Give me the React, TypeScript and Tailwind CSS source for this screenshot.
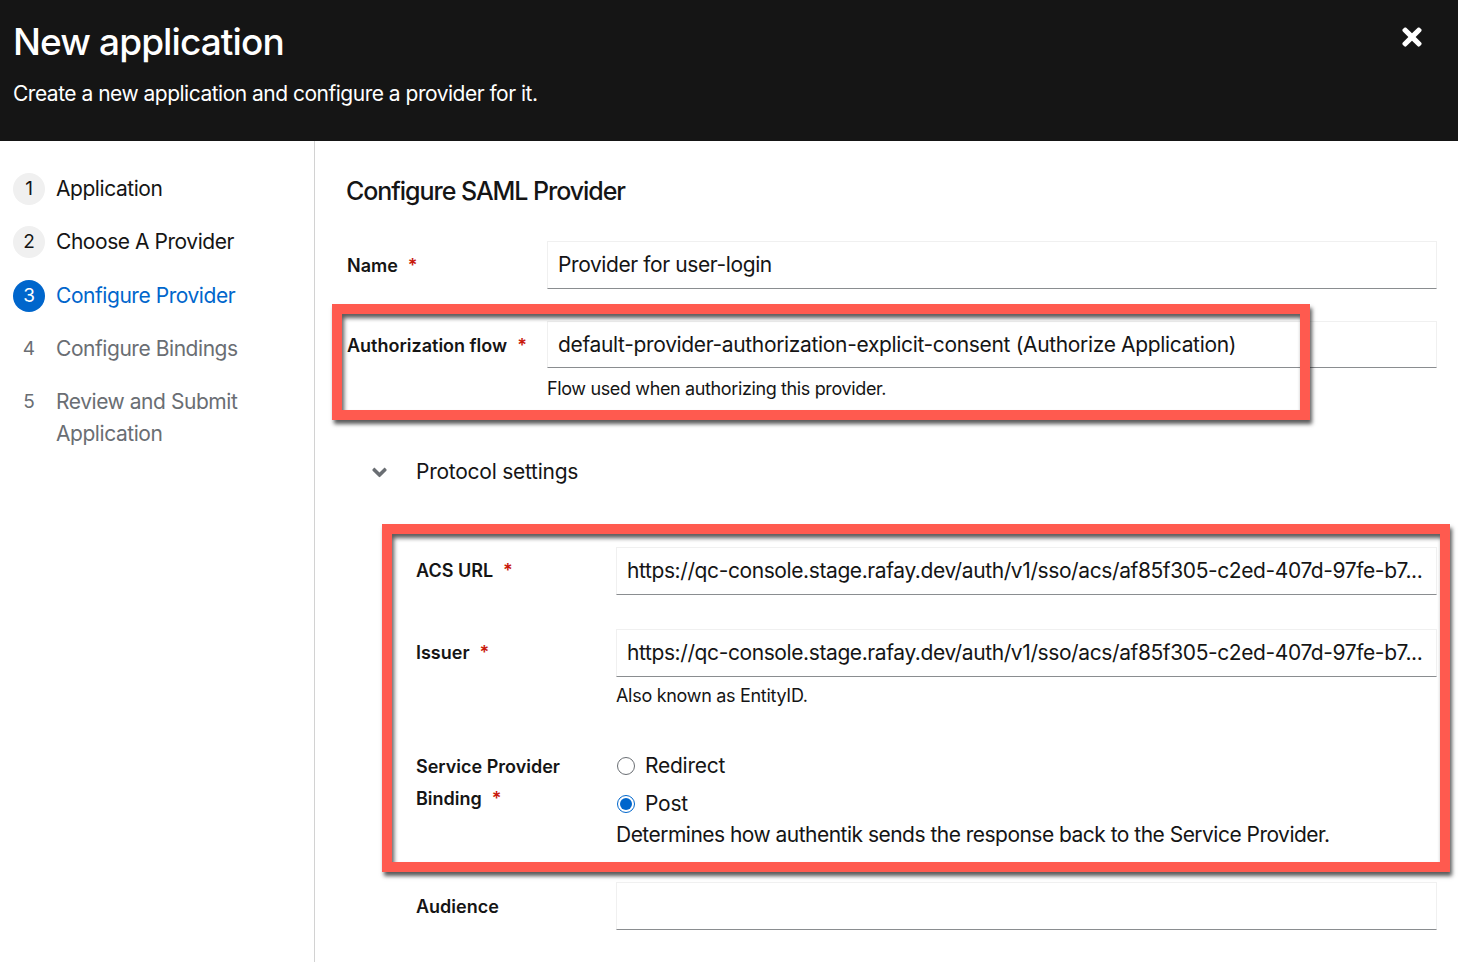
import { FaTimes, FaAngleDown } from "react-icons/fa";

const font = "[font-family:Inter,'Liberation_Sans',sans-serif]";

function Step({ n, label, state, className = "" }: { n: number; label: string; state: "done" | "active" | "todo"; className?: string }) {
  const circle =
    state === "active"
      ? "bg-[#0066cc] text-white"
      : state === "done"
        ? "bg-[#f0f0f0] text-[#151515]"
        : "text-[#6a6e73]";
  const text = state === "active" ? "text-[#0066cc]" : state === "done" ? "text-[#151515]" : "text-[#6a6e73]";
  return (
    <div className={`flex items-start ${className}`}>
      <span className={`flex h-8 w-8 shrink-0 items-center justify-center rounded-full text-[19px] ${circle}`}>{n}</span>
      <span className={`ml-[11px] text-[21px] leading-[32px] tracking-[-0.45px] ${text}`}>{label}</span>
    </div>
  );
}

function Field({ value, className = "h-12 leading-[46px] tracking-[-0.4px]" }: { value?: string; className?: string }) {
  return (
    <div className={`w-full min-w-0 truncate border border-[#f0f0f0] border-b-[#8a8d90] pl-[10px] text-[21px] text-[#151515] ${className}`}>
      {value}
    </div>
  );
}

function Label({ text, required = true }: { text: string; required?: boolean }) {
  return (
    <span className="text-[18px] font-semibold leading-[32px] text-[#151515]">
      {text}
      {required && <span className="ml-[10px] text-[#c9190b]">*</span>}
    </span>
  );
}

const URL_TEXT = "https://qc-console.stage.rafay.dev/auth/v1/sso/acs/af85f305-c2ed-407d-97fe-b7...";

function Radio({ checked, label, className = "" }: { checked?: boolean; label: string; className?: string }) {
  return (
    <div className={`flex items-center pl-[1px] ${className}`}>
      <span className={`flex h-[18px] w-[18px] items-center justify-center rounded-full border ${checked ? "border-[#0066cc]" : "border-[#6a6e73]"}`}>
        {checked && <span className="h-3 w-3 rounded-full bg-[#0066cc]" />}
      </span>
      <span className="ml-[10px] text-[21px] leading-[28px] tracking-[-0.25px] text-[#151515]">{label}</span>
    </div>
  );
}

export default function App() {
  return (
    <div className={`relative flex h-[962px] w-[1458px] flex-col overflow-hidden bg-white ${font}`}>
      <header className="relative h-[141px] shrink-0 bg-[#151515] pl-[13px] pt-[18px] text-white">
        <h1 className="text-[37px] font-medium leading-[48px] tracking-[-0.9px]">New application</h1>
        <p className="mt-[12px] text-[21px] leading-[32px] tracking-[-0.5px]">Create a new application and configure a provider for it.</p>
        <FaTimes className="absolute left-[1402px] top-[23px] h-[28px] w-[20px] text-white" />
      </header>
      <div className="flex min-h-0 flex-1">
        <nav className="w-[315px] shrink-0 border-r border-[#d2d2d2] pl-[13px] pt-[32px]">
          <Step n={1} label="Application" state="done" />
          <Step n={2} label="Choose A Provider" state="done" className="mt-[21px]" />
          <Step n={3} label="Configure Provider" state="active" className="mt-[22px]" />
          <Step n={4} label="Configure Bindings" state="todo" className="mt-[21px]" />
          <Step n={5} label="Review and Submit Application" state="todo" className="mt-[21px] w-[260px]" />
        </nav>
        <main className="min-w-0 flex-1 pl-[32px] pr-[21px] pt-[32px]">
          <h2 className="-ml-[1px] text-[25px] font-medium leading-[36px] tracking-[-1.05px] text-[#151515]">Configure SAML Provider</h2>
          <div className="mt-[32px] flex">
            <div className="w-[200px] shrink-0 pt-[9px]"><Label text="Name" /></div>
            <Field value="Provider for user-login" />
          </div>
          <div className="mt-[32px] flex">
            <div className="w-[200px] shrink-0 pt-[9px]"><Label text="Authorization flow" /></div>
            <div className="min-w-0 flex-1">
              <Field value="default-provider-authorization-explicit-consent (Authorize Application)" className="h-[47px] leading-[45px] tracking-[-0.34px]" />
              <p className="mt-[5px] text-[18px] leading-[32px] tracking-[-0.37px] text-[#151515]">Flow used when authorizing this provider.</p>
            </div>
          </div>
          <div className="mt-[51px] flex items-center pl-[25px]">
            <FaAngleDown className="h-[23px] w-[15px] text-[#6a6e73]" />
            <span className="ml-[29px] text-[21px] leading-[32px] tracking-[-0.25px] text-[#151515]">Protocol settings</span>
          </div>
          <div className="mt-[59px] pl-[69px]">
            <div className="flex">
              <div className="w-[200px] shrink-0 pt-[8px]"><Label text="ACS URL" /></div>
              <Field value={URL_TEXT} />
            </div>
            <div className="mt-[34px] flex">
              <div className="w-[200px] shrink-0 pt-[8px]"><Label text="Issuer" /></div>
              <div className="min-w-0 flex-1">
                <Field value={URL_TEXT} />
                <p className="mt-[3px] text-[18px] leading-[32px] tracking-[-0.3px] text-[#151515]">Also known as EntityID.</p>
              </div>
            </div>
            <div className="mt-[40px] flex">
              <div className="-mt-[1px] w-[200px] shrink-0">
                <div><Label text="Service Provider" required={false} /></div>
                <div><Label text="Binding" /></div>
              </div>
              <div className="min-w-0 flex-1">
                <Radio label="Redirect" />
                <Radio checked label="Post" className="mt-[10px]" />
                <p className="mt-[1px] text-[21px] leading-[32px] tracking-[-0.52px] text-[#151515]">Determines how authentik sends the response back to the Service Provider.</p>
              </div>
            </div>
            <div className="mt-[31px] flex">
              <div className="w-[200px] shrink-0 pt-[9px]"><Label text="Audience" required={false} /></div>
              <Field />
            </div>
          </div>
        </main>
      </div>
      <div className="absolute left-[332px] top-[304px] h-[116px] w-[978px] border-[10px] border-[#ff5a4f] shadow-[2px_4px_4px_rgba(0,0,0,0.65),inset_2px_4px_4px_rgba(0,0,0,0.65)]" />
      <div className="absolute left-[382px] top-[524px] h-[348px] w-[1068px] border-[10px] border-[#ff5a4f] shadow-[2px_4px_4px_rgba(0,0,0,0.65),inset_2px_4px_4px_rgba(0,0,0,0.65)]" />
    </div>
  );
}
